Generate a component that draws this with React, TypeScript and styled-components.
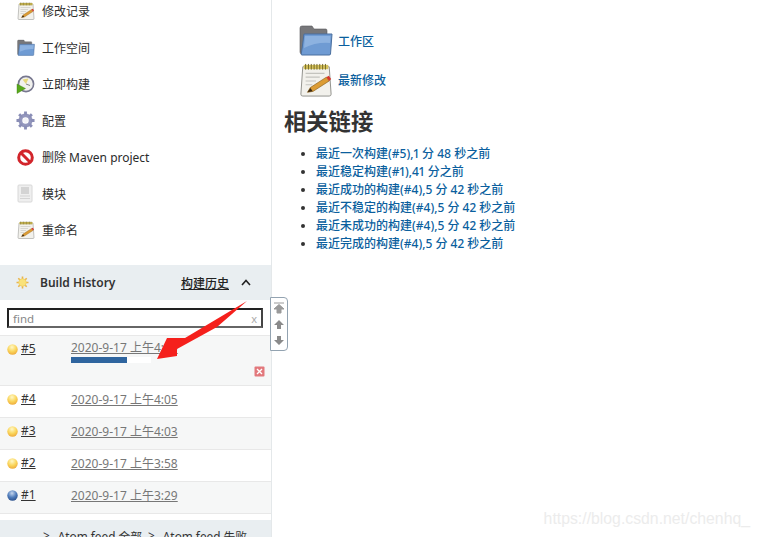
import React from "react";
import styled, { createGlobalStyle } from "styled-components";

const FONT = `"Noto Sans", "Noto Sans CJK SC", sans-serif`;

const GlobalStyle = createGlobalStyle`
  html, body {
    margin: 0;
    padding: 0;
    background: #fff;
    overflow: hidden;
  }
  * {
    box-sizing: border-box;
  }
`;

const Page = styled.div`
  position: relative;
  display: flex;
  width: 759px;
  height: 537px;
  overflow: hidden;
  font-family: ${FONT};
  font-size: 12px;
  color: #333;
`;

const Sidebar = styled.aside`
  width: 272px;
  height: 537px;
  flex: none;
  border-right: 1px solid #e4e8ea;
  overflow: hidden;
`;

const TaskList = styled.div`
  margin-top: -7px;
  padding-bottom: 16.5px;
`;

const TaskRow = styled.a`
  display: flex;
  align-items: center;
  height: 36.5px;
  padding-left: 16px;
  gap: 7px;
  color: #2b2b2b;
`;

const TaskIcon = styled.span`
  display: flex;
  align-items: center;
  justify-content: center;
  width: 19px;
  height: 19px;
  flex: none;
`;

const HistoryHeader = styled.div`
  display: flex;
  align-items: center;
  height: 35px;
  background: #e9eef1;
  padding-left: 16px;
`;

const HeaderTitle = styled.span`
  margin-left: 11px;
  font-weight: 600;
  color: #333;
`;

const HeaderLink = styled.span`
  margin-left: auto;
  font-weight: 500;
  text-decoration: underline;
  color: #222;
`;

const Chevron = styled.svg`
  margin: 0 20px 0 12px;
`;

const SearchBar = styled.div`
  height: 36px;
  padding: 8px 8px 0 7px;
  border-bottom: 1px solid #e8e8e8;
`;

const SearchBox = styled.div`
  display: flex;
  align-items: center;
  justify-content: space-between;
  height: 20px;
  padding: 0 4px 0 4px;
  border: 2px solid #222;
  border-bottom-color: #666;
  border-right-color: #444;
  color: #888;
  font-size: 11.5px;
`;

const ClearMark = styled.span`
  color: #aaa;
  font-size: 11px;
`;

const BuildRow = styled.div<{ $shaded?: boolean; $tall?: boolean }>`
  position: relative;
  display: flex;
  height: ${(props) => (props.$tall ? "50px" : "32px")};
  padding: 4px 0 0 7px;
  background: ${(props) => (props.$shaded ? "#f6f7f7" : "#fff")};
  border-bottom: 1px solid #e8e8e8;
`;

const BallWrap = styled.span`
  display: flex;
  width: 14px;
  height: 19px;
  align-items: center;
  flex: none;
`;

const BuildNumber = styled.span`
  width: 50px;
  flex: none;
  color: #333;
  text-decoration: underline;
`;

const BuildTime = styled.div`
  color: #777;
  text-decoration: underline;
  white-space: nowrap;
`;

const ProgressTrack = styled.div`
  width: 80px;
  height: 6px;
  margin-top: 1px;
  background: #fff;
`;

const ProgressFill = styled.div`
  height: 100%;
  background: #2f659f;
`;

const StopButton = styled.svg`
  position: absolute;
  right: 6px;
  bottom: 8px;
`;

const BuildInfo = styled.div`
  line-height: 16px;
`;

const FeedBar = styled.div`
  display: flex;
  gap: 6px;
  margin-top: 6px;
  height: 40px;
  padding: 7px 0 0 43px;
  background: #e9eef1;
  color: #333;
  font-size: 11.8px;
`;

const FeedLink = styled.span`
  display: flex;
  gap: 8px;
  white-space: nowrap;
`;

const Main = styled.main`
  flex: 1;
  padding: 25px 0 0 12px;
`;

const SummaryRow = styled.div<{ $height: number }>`
  display: flex;
  align-items: center;
  gap: 5px;
  height: ${(props) => props.$height}px;
  padding-left: 15px;
`;

const SummaryLink = styled.a`
  color: #0b5f9e;
  font-weight: 500;
`;

const Heading = styled.h1`
  margin: 1px 0 0;
  font-size: 22.3px;
  line-height: 36px;
  font-weight: 700;
  color: #333;
`;

const LinkList = styled.ul`
  list-style: disc;
  margin: 5px 0 0;
  padding: 0 0 0 32px;
`;

const LinkItem = styled.li`
  height: 18px;
  line-height: 18px;
  color: #333;
  white-space: nowrap;
`;

const LinkText = styled.a`
  color: #0b5f9e;
  font-weight: 500;
  font-variant-numeric: proportional-nums;
`;

const ScrollWidget = styled.div`
  position: absolute;
  left: 270px;
  top: 297px;
  display: flex;
  flex-direction: column;
  align-items: center;
  justify-content: space-between;
  width: 18px;
  height: 54px;
  padding: 4px 0;
  background: #fff;
  border: 1px solid #93a3b1;
  border-radius: 0 4px 4px 0;
`;

const Annotation = styled.svg`
  position: absolute;
  left: 150px;
  top: 295px;
  pointer-events: none;
`;

const Watermark = styled.div`
  position: absolute;
  right: 9px;
  top: 510px;
  font-family: "Liberation Sans", sans-serif;
  font-size: 15.8px;
  color: #ececec;
`;

const NotepadIcon = ({ size }: { size: number }) => (
  <svg width={size} height={size} viewBox="0 0 34 36">
    <path d="M3 4 H31 L33 33 Q33 35 31 35 H3 Q1 35 1 33Z" fill="#f2f1ec" stroke="#8d8d88" />
    <rect x="4" y="2" width="26" height="4.5" fill="#d6c25a" />
    <path d="M6 1v6M9 1v6M12 1v6M15 1v6M18 1v6M21 1v6M24 1v6M27 1v6" stroke="#6e6528" strokeWidth="1" />
    <path d="M6 11h20M6 15h15M6 19h11M6 23h7" stroke="#c4c4be" strokeWidth="1.2" />
    <path d="M8 31 L11 26 L28 15 L31 19 L14 30Z" fill="#dc9c34" stroke="#8a5f1c" strokeWidth="0.7" />
    <path d="M28 15 L31 19 L33 17 L30.5 13.5Z" fill="#d8342c" />
    <path d="M8 31 L11 26.5 L13.5 29.8Z" fill="#3b2a14" />
  </svg>
);

const FolderIcon = ({ size }: { size: number }) => (
  <svg width={size} height={size} viewBox="0 0 34 32">
    <path d="M1 3 Q1 1 3 1 H13 L15 4 H27 Q28 4 28 6 V10 H5 L4 29 H3 Q1 29 1 27Z" fill="#77777a" stroke="#58585b" strokeWidth="0.6" />
    <path d="M5 9 H33 L31.5 29 Q31.5 30 30 30 H3 Q2 30 2.3 29Z" fill="#6f9bd3" stroke="#4a6f9f" />
    <path d="M6 11 H31.5 L31 18 Q17 17 5 23Z" fill="#8db2e0" />
  </svg>
);

const ClockIcon = () => (
  <svg width="19" height="19" viewBox="0 0 19 19">
    <circle cx="10" cy="9" r="7.6" fill="#f1f1ee" stroke="#77778f" strokeWidth="1.6" />
    <path d="M10 9 L12.5 3.5 L6.5 4.5Z" fill="#e5d77a" />
    <path d="M10 9 L14 10.5" stroke="#777" strokeWidth="0.9" />
    <path d="M1 9 L9.5 13.5 L1 18.5Z" fill="#58a81c" stroke="#3e7f12" strokeWidth="0.4" />
  </svg>
);

const GearIcon = () => (
  <svg width="19" height="19" viewBox="0 0 20 20">
    <circle cx="10" cy="10" r="5.4" fill="none" stroke="#9497bd" strokeWidth="4" />
    <path
      d="M10 0.5v4M10 15.5v4M0.5 10h4M15.5 10h4M3.3 3.3l2.9 2.9M13.8 13.8l2.9 2.9M16.7 3.3l-2.9 2.9M6.2 13.8l-2.9 2.9"
      stroke="#8a8eb6"
      strokeWidth="3"
    />
    <circle cx="10" cy="10" r="2.6" fill="#f4f4f8" />
  </svg>
);

const NoEntryIcon = () => (
  <svg width="19" height="19" viewBox="0 0 19 19">
    <circle cx="9.5" cy="9.5" r="6.8" fill="#fff" stroke="#d2252b" strokeWidth="3" />
    <path d="M4.8 4.8 L14.2 14.2" stroke="#d2252b" strokeWidth="3" />
  </svg>
);

const ModuleIcon = () => (
  <svg width="19" height="19" viewBox="0 0 19 19">
    <rect x="2" y="1" width="14" height="17" rx="1" fill="#efefef" stroke="#d8d8d8" />
    <rect x="5" y="3" width="8" height="7" fill="#d4d4d4" />
    <path d="M4 12h10M4 14.5h10" stroke="#d4d4d4" strokeWidth="1.2" />
  </svg>
);

const SunIcon = () => (
  <svg width="13" height="13" viewBox="0 0 13 13">
    <path
      d="M6.5 0.5v12M0.5 6.5h12M2.3 2.3l8.4 8.4M10.7 2.3l-8.4 8.4"
      stroke="#e9b44c"
      strokeWidth="1.6"
    />
    <circle cx="6.5" cy="6.5" r="3.8" fill="#f9e27a" stroke="#edc95a" strokeWidth="0.6" />
  </svg>
);

const Ball = ({ blue }: { blue?: boolean }) => {
  const id = blue ? "ballBlue" : "ballYellow";
  return (
    <svg width="11" height="11" viewBox="0 0 11 11">
      <defs>
        <radialGradient id={id} cx="45%" cy="28%" r="75%">
          <stop offset="0" stopColor={blue ? "#c5d6ee" : "#fff8c8"} />
          <stop offset="0.55" stopColor={blue ? "#4f7cbb" : "#fad65c"} />
          <stop offset="1" stopColor={blue ? "#2a4f8a" : "#eda93a"} />
        </radialGradient>
      </defs>
      <circle cx="5.5" cy="5.5" r="5.2" fill={`url(#${id})`} />
    </svg>
  );
};

const tasks: { label: string; icon: React.ReactNode }[] = [
  { label: "修改记录", icon: <NotepadIcon size={18} /> },
  { label: "工作空间", icon: <FolderIcon size={18} /> },
  { label: "立即构建", icon: <ClockIcon /> },
  { label: "配置", icon: <GearIcon /> },
  { label: "删除 Maven project", icon: <NoEntryIcon /> },
  { label: "模块", icon: <ModuleIcon /> },
  { label: "重命名", icon: <NotepadIcon size={18} /> },
];

const builds = [
  { id: "#4", time: "2020-9-17 上午4:05", shaded: false },
  { id: "#3", time: "2020-9-17 上午4:03", shaded: true },
  { id: "#2", time: "2020-9-17 上午3:58", shaded: false },
  { id: "#1", time: "2020-9-17 上午3:29", shaded: true, blue: true },
];

const permalinks = [
  "最近一次构建(#5),1 分 48 秒之前",
  "最近稳定构建(#1),41 分之前",
  "最近成功的构建(#4),5 分 42 秒之前",
  "最近不稳定的构建(#4),5 分 42 秒之前",
  "最近未成功的构建(#4),5 分 42 秒之前",
  "最近完成的构建(#4),5 分 42 秒之前",
];

export default function App() {
  return (
    <Page>
      <GlobalStyle />
      <Sidebar>
        <TaskList>
          {tasks.map((task) => (
            <TaskRow key={task.label}>
              <TaskIcon>{task.icon}</TaskIcon>
              {task.label}
            </TaskRow>
          ))}
        </TaskList>

        <HistoryHeader>
          <SunIcon />
          <HeaderTitle>Build History</HeaderTitle>
          <HeaderLink>构建历史</HeaderLink>
          <Chevron width="10" height="7" viewBox="0 0 10 7">
            <path d="M1 6 L5 1.5 L9 6" fill="none" stroke="#222" strokeWidth="1.6" />
          </Chevron>
        </HistoryHeader>
        <SearchBar>
          <SearchBox>
            find
            <ClearMark>x</ClearMark>
          </SearchBox>
        </SearchBar>

        <BuildRow $shaded $tall>
          <BallWrap>
            <Ball />
          </BallWrap>
          <BuildNumber>#5</BuildNumber>
          <BuildInfo>
            <BuildTime>2020-9-17 上午4:05</BuildTime>
            <ProgressTrack>
              <ProgressFill style={{ width: "70%" }} />
            </ProgressTrack>
          </BuildInfo>
          <StopButton width="11" height="11" viewBox="0 0 11 11">
            <rect x="0.5" y="0.5" width="10" height="10" rx="1" fill="#e2787c" />
            <path d="M3 3 L8 8 M8 3 L3 8" stroke="#fff" strokeWidth="1.4" />
          </StopButton>
        </BuildRow>
        {builds.map((build) => (
          <BuildRow key={build.id} $shaded={build.shaded}>
            <BallWrap>
              <Ball blue={build.blue} />
            </BallWrap>
            <BuildNumber>{build.id}</BuildNumber>
            <BuildTime>{build.time}</BuildTime>
          </BuildRow>
        ))}

        <FeedBar>
          <FeedLink>
            <span>&gt;</span>
            <span>Atom feed 全部</span>
          </FeedLink>
          <FeedLink>
            <span>&gt;</span>
            <span>Atom feed 失败</span>
          </FeedLink>
        </FeedBar>
      </Sidebar>

      <Main>
        <SummaryRow $height={32}>
          <FolderIcon size={34} />
          <SummaryLink>工作区</SummaryLink>
        </SummaryRow>
        <SummaryRow $height={46}>
          <NotepadIcon size={34} />
          <SummaryLink>最新修改</SummaryLink>
        </SummaryRow>
        <Heading>相关链接</Heading>
        <LinkList>
          {permalinks.map((text) => (
            <LinkItem key={text}>
              <LinkText>{text}</LinkText>
            </LinkItem>
          ))}
        </LinkList>
      </Main>

      <ScrollWidget>
        <svg width="10" height="12" viewBox="0 0 10 12">
          <path d="M0 1h10M5 2.5 L10 7H7v4H3V7H0Z" stroke="#9a9a9a" strokeWidth="1" fill="#9a9a9a" />
        </svg>
        <svg width="10" height="11" viewBox="0 0 10 11">
          <path d="M5 1 L10 6H7v4H3V6H0Z" fill="#8a8a8a" />
        </svg>
        <svg width="10" height="11" viewBox="0 0 10 11">
          <path d="M3 1h4v4h3L5 10 0 5h3Z" fill="#8a8a8a" />
        </svg>
      </ScrollWidget>

      <Annotation width="100" height="70" viewBox="0 0 100 70">
        <path d="M97 6 L67 32 L27 54 L27 61 L7 64 L17 43 L35 43Z" fill="#f5201c" />
      </Annotation>

      <Watermark>https://blog.csdn.net/chenhq_</Watermark>
    </Page>
  );
}
